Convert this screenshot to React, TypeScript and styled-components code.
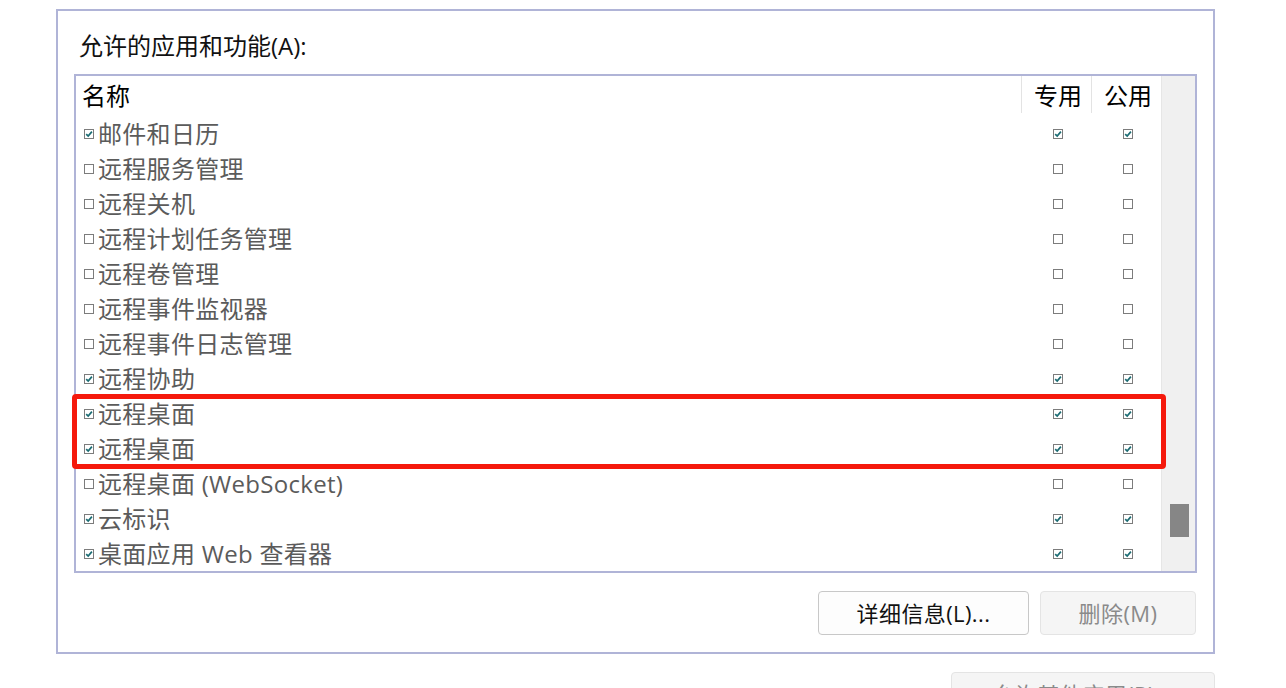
import React from "react";
import styled, { createGlobalStyle } from "styled-components";

const Global = createGlobalStyle`
  html, body {
    margin: 0;
    padding: 0;
    background: #ffffff;
    overflow: hidden;
  }
  body {
    font-family: "Open Sans", "Noto Sans CJK SC", sans-serif;
  }
`;

const Page = styled.div`
  width: 1286px;
  height: 688px;
  padding: 9px 0 0 56px;
  box-sizing: border-box;
  display: flex;
  flex-direction: column;
  align-items: flex-start;
  overflow: hidden;
`;

const GroupBox = styled.section`
  flex: none;
  width: 1159px;
  height: 645px;
  box-sizing: border-box;
  border: 2px solid #b0b4d7;
  padding: 19px 16px 0 16px;
  display: flex;
  flex-direction: column;
`;

const GroupLabel = styled.div`
  font-size: 24px;
  line-height: 32px;
  color: #111;
  padding-left: 5px;
  height: 32px;
  margin-bottom: 12px;
  white-space: nowrap;
`;

const ListBox = styled.div`
  position: relative;
  flex: none;
  width: 1123px;
  height: 499px;
  box-sizing: border-box;
  border: 2px solid #b0b4d7;
  display: flex;
  background: #fff;
`;

const Table = styled.div`
  width: 1085px;
  display: grid;
  grid-template-columns: 945px 70px 70px;
  grid-auto-rows: 35px;
  grid-template-rows: 40px;
  align-content: start;
`;

const HeaderCell = styled.div<{ $sep?: boolean; $center?: boolean }>`
  font-size: 24px;
  line-height: 40px;
  color: #000;
  padding-left: ${(p) => (p.$center ? "3px" : "6px")};
  text-align: ${(p) => (p.$center ? "center" : "left")};
  border-left: ${(p) => (p.$sep ? "1px solid #e3e3e3" : "none")};
  box-sizing: border-box;
  height: 37px;
  white-space: nowrap;
`;

const NameCell = styled.div`
  display: flex;
  align-items: center;
  gap: 4px;
  padding-left: 8px;
  font-size: 24px;
  line-height: 35px;
  color: #5b5b5b;
  letter-spacing: 0.3px;
  white-space: nowrap;
`;

const BoxCell = styled.div`
  display: flex;
  align-items: center;
  justify-content: center;
  padding-left: 4px;
`;

const Box = styled.span`
  width: 10px;
  height: 10px;
  box-sizing: border-box;
  border: 1px solid #7c7c7c;
  background: #fff;
  display: inline-flex;
  align-items: center;
  justify-content: center;
  flex: none;
  margin-top: 1px;
`;

const ScrollBar = styled.div`
  width: 34px;
  background: #f0f0f0;
  border-left: 1px solid #e6e6e6;
  box-sizing: border-box;
  display: flex;
  flex-direction: column;
  padding: 428px 0 0 8px;
`;

const Thumb = styled.div`
  width: 19px;
  height: 33px;
  background: #868686;
`;

const Highlight = styled.div`
  position: absolute;
  left: -4px;
  top: 318px;
  width: 1094px;
  height: 75px;
  box-sizing: border-box;
  border: 5px solid #f5190c;
  border-radius: 4px;
  pointer-events: none;
`;

const ButtonRow = styled.div`
  display: flex;
  justify-content: flex-end;
  gap: 11px;
  width: 1122px;
  margin-top: 18px;
`;

const Button = styled.button<{ $width: number; $disabled?: boolean }>`
  flex: none;
  width: ${(p) => p.$width}px;
  height: 44px;
  box-sizing: border-box;
  border-radius: 4px;
  border: 1px solid ${(p) => (p.$disabled ? "#e4e4e4" : "#c8c8c8")};
  background: ${(p) => (p.$disabled ? "#f5f5f5" : "#fdfdfd")};
  color: ${(p) => (p.$disabled ? "#8a8a8a" : "#111")};
  font-family: "Open Sans", "Noto Sans CJK SC", sans-serif;
  font-size: 22px;
  letter-spacing: 0.4px;
  line-height: 42px;
  padding: 0;
  white-space: nowrap;
`;

const BottomRow = styled.div`
  flex: none;
  width: 1159px;
  display: flex;
  justify-content: flex-end;
  margin-top: 18px;
`;

const Check: React.FC<{ on: boolean }> = ({ on }) => (
  <Box>
    {on && (
      <svg width="8" height="8" viewBox="0 0 8 8">
        <path
          d="M1.2 4.1 L3.2 6.1 L6.9 1.6"
          fill="none"
          stroke="#1b6c73"
          strokeWidth="1.7"
        />
      </svg>
    )}
  </Box>
);

const rows: [string, boolean, boolean, boolean][] = [
  ["邮件和日历", true, true, true],
  ["远程服务管理", false, false, false],
  ["远程关机", false, false, false],
  ["远程计划任务管理", false, false, false],
  ["远程卷管理", false, false, false],
  ["远程事件监视器", false, false, false],
  ["远程事件日志管理", false, false, false],
  ["远程协助", true, true, true],
  ["远程桌面", true, true, true],
  ["远程桌面", true, true, true],
  ["远程桌面 (WebSocket)", false, false, false],
  ["云标识", true, true, true],
  ["桌面应用 Web 查看器", true, true, true],
];

export default function App() {
  return (
    <>
      <Global />
      <Page>
        <GroupBox>
          <GroupLabel>允许的应用和功能(A):</GroupLabel>
          <ListBox>
            <Table>
              <HeaderCell>名称</HeaderCell>
              <HeaderCell $sep $center>专用</HeaderCell>
              <HeaderCell $sep $center>公用</HeaderCell>
              {rows.map(([name, a, b, c], i) => (
                <React.Fragment key={i}>
                  <NameCell>
                    <Check on={a} />
                    <span>{name}</span>
                  </NameCell>
                  <BoxCell>
                    <Check on={b} />
                  </BoxCell>
                  <BoxCell>
                    <Check on={c} />
                  </BoxCell>
                </React.Fragment>
              ))}
            </Table>
            <ScrollBar>
              <Thumb />
            </ScrollBar>
            <Highlight />
          </ListBox>
          <ButtonRow>
            <Button $width={211}>详细信息(L)...</Button>
            <Button $width={156} $disabled>
              删除(M)
            </Button>
          </ButtonRow>
        </GroupBox>
        <BottomRow>
          <Button $width={264} $disabled>
            允许其他应用(R)...
          </Button>
        </BottomRow>
      </Page>
    </>
  );
}
